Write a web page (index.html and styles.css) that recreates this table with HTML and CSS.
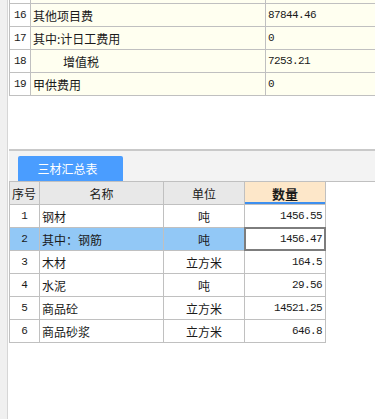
FILE: index.html
```html
<!DOCTYPE html>
<html lang="zh-CN">
<head>
<meta charset="utf-8">
<title>三材汇总表</title>
<link rel="stylesheet" href="styles.css">
</head>
<body>
<div class="app">
  <div class="side"></div>
  <div class="main">
    <div class="fee-view">
      <div class="fee-table">
        <div class="frow cut"><div class="fc no"></div><div class="fc name"></div><div class="fc val"></div></div>
        <div class="frow"><div class="fc no">16</div><div class="fc name">其他项目费</div><div class="fc val">87844.46</div></div>
        <div class="frow"><div class="fc no">17</div><div class="fc name">其中:计日工费用</div><div class="fc val">0</div></div>
        <div class="frow"><div class="fc no">18</div><div class="fc name indent">增值税</div><div class="fc val">7253.21</div></div>
        <div class="frow"><div class="fc no">19</div><div class="fc name">甲供费用</div><div class="fc val">0</div></div>
      </div>
    </div>

    <div class="tabbar">
      <div class="tab">三材汇总表</div>
    </div>

    <div class="mat-table">
      <div class="mrow head">
        <div class="mc no">序号</div>
        <div class="mc name">名称</div>
        <div class="mc unit">单位</div>
        <div class="mc qty sorted">数量</div>
      </div>
      <div class="mrow"><div class="mc no">1</div><div class="mc name">钢材</div><div class="mc unit">吨</div><div class="mc qty">1456.55</div></div>
      <div class="mrow selected"><div class="mc no">2</div><div class="mc name">其中：钢筋</div><div class="mc unit">吨</div><div class="mc qty focus">1456.47</div></div>
      <div class="mrow"><div class="mc no">3</div><div class="mc name">木材</div><div class="mc unit">立方米</div><div class="mc qty">164.5</div></div>
      <div class="mrow"><div class="mc no">4</div><div class="mc name">水泥</div><div class="mc unit">吨</div><div class="mc qty">29.56</div></div>
      <div class="mrow"><div class="mc no">5</div><div class="mc name">商品砼</div><div class="mc unit">立方米</div><div class="mc qty">14521.25</div></div>
      <div class="mrow"><div class="mc no">6</div><div class="mc name">商品砂浆</div><div class="mc unit">立方米</div><div class="mc qty">646.8</div></div>
    </div>
  </div>
</div>
</body>
</html>
```

FILE: styles.css
```css
html, body {
  margin: 0;
  padding: 0;
  background: #ffffff;
}

body {
  font-family: "Noto Sans CJK SC", "Noto Sans", sans-serif;
  font-size: 12px;
  color: #1a1a1a;
}

.app {
  display: flex;
  width: 375px;
  height: 419px;
  overflow: hidden;
}

.side {
  width: 7px;
  flex: none;
  background: #f0f0f0;
  border-right: 1px solid #d6d6d6;
}

.main {
  flex: 1;
  min-width: 0;
  padding-left: 1px;
  display: flex;
  flex-direction: column;
}

/* ---------- top fee table (scrolled view) ---------- */
.fee-view {
  overflow: hidden;
  flex: none;
}

.fee-table {
  border-left: 1px solid #c0c0c0;
}

.frow {
  display: grid;
  grid-template-columns: 21px 235px 1fr;
  height: 22px;
  border-bottom: 1px solid #c0c0c0;
}

.frow.cut {
  margin-top: -19px;
}

.fc {
  display: flex;
  align-items: center;
  padding: 0 2px;
  background: #fffff0;
  border-right: 1px solid #c0c0c0;
  white-space: nowrap;
  overflow: hidden;
}

.fc.no {
  background: #ffffff;
  justify-content: center;
  padding: 0;
  font-family: "Liberation Mono", monospace;
  font-size: 11px;
  letter-spacing: -0.6px;
}

.fc.val {
  border-right: none;
  font-family: "Liberation Mono", monospace;
  font-size: 11px;
  letter-spacing: -0.6px;
}

.fc.indent {
  padding-left: 32px;
}

/* ---------- tab bar ---------- */
.tabbar {
  margin-top: 53px;
  height: 30px;
  background: #f3f3f3;
  border-top: 2px solid #c9c9c9;
  border-bottom: 1px solid #c0c0c0;
  padding-left: 9px;
  display: flex;
  align-items: flex-end;
  flex: none;
}

.tab {
  width: 105px;
  height: 25px;
  background: #4a9dff;
  border-radius: 2px 2px 0 0;
  color: #ffffff;
  font-size: 12px;
  display: flex;
  align-items: center;
  justify-content: center;
  padding-right: 6px;
  box-sizing: border-box;
}

/* ---------- materials table ---------- */
.mat-table {
  width: 316px;
  border-left: 1px solid #c0c0c0;
  flex: none;
}

.mrow {
  display: grid;
  grid-template-columns: 30px 124px 81px 81px;
  height: 22px;
  border-bottom: 1px solid #c0c0c0;
}

.mc {
  display: flex;
  align-items: center;
  padding: 0 2px;
  border-right: 1px solid #c0c0c0;
  background: #ffffff;
  white-space: nowrap;
  position: relative;
}

.mc.no {
  justify-content: center;
  font-family: "Liberation Mono", monospace;
  font-size: 11px;
}

.mc.unit {
  justify-content: center;
}

.mc.qty {
  justify-content: flex-end;
  padding-right: 3px;
  font-family: "Liberation Mono", monospace;
  font-size: 11px;
  letter-spacing: -0.6px;
}

.head .mc {
  background: #e8e8e8;
  font-family: "Noto Sans CJK SC", sans-serif;
  font-size: 12px;
  letter-spacing: 0;
  justify-content: center;
}

.head .mc.no {
  justify-content: flex-start;
  padding: 0 0 0 2px;
  font-size: 12px;
}

.head .mc.sorted {
  background: #fde7c9;
  font-weight: bold;
  font-size: 13px;
  box-shadow: inset 0 -2px 0 #3d8fef;
  padding-right: 2px;
}

.selected .mc {
  background: #92c8f6;
}

.selected .mc.qty {
  background: #ffffff;
}

.mc.focus::after {
  content: "";
  position: absolute;
  left: -1px;
  top: -1px;
  right: -1px;
  bottom: -1px;
  border: 2px solid #7d7d7d;
}
```
